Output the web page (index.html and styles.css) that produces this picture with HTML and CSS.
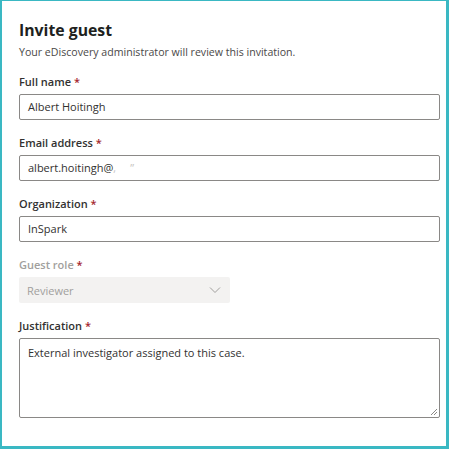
FILE: index.html
```html
<!DOCTYPE html>
<html>
<head>
<meta charset="utf-8">
<link rel="stylesheet" href="styles.css">
</head>
<body>
<div class="panel">
  <h1 class="title">Invite guest</h1>
  <p class="subtitle">Your eDiscovery administrator will review this invitation.</p>
  <div class="field">
    <label class="label">Full name <span class="req">*</span></label>
    <div class="input">Albert Hoitingh</div>
  </div>
  <div class="field">
    <label class="label">Email address <span class="req">*</span></label>
    <div class="input">albert.hoitingh@<span class="blur">&#8218;&nbsp;&nbsp;&nbsp;&nbsp;&nbsp;&#8221;</span></div>
  </div>
  <div class="field">
    <label class="label">Organization <span class="req">*</span></label>
    <div class="input">InSpark</div>
  </div>
  <div class="field">
    <label class="label disabled">Guest role <span class="req">*</span></label>
    <div class="select">
      <span>Reviewer</span>
      <svg class="chev" width="12" height="8" viewBox="0 0 12 8"><path d="M1 1.5 L6 6.5 L11 1.5" fill="none" stroke="#a19f9d" stroke-width="1"/></svg>
    </div>
  </div>
  <div class="field">
    <label class="label">Justification <span class="req">*</span></label>
    <div class="textarea">External investigator assigned to this case.
      <svg class="grip" width="9" height="9" viewBox="0 0 9 9"><path d="M8 2 L2 8 M8 5 L5 8" stroke="#8a8886" stroke-width="1"/></svg>
    </div>
  </div>
</div>
</body>
</html>
```
FILE: styles.css
```css
html, body {
  margin: 0;
  padding: 0;
  background: #ffffff;
}
body {
  font-family: "Open Sans", "Noto Sans", sans-serif;
  color: #323130;
}
.panel {
  box-sizing: border-box;
  width: 449px;
  height: 449px;
  border-style: solid;
  border-color: #3ab8c3;
  border-width: 1px 3px 3px 2px;
  padding: 17px 8px 0 17px;
}
.title {
  margin: 0;
  font-size: 15.8px;
  font-weight: 700;
  line-height: 24px;
  color: #201f1e;
}
.subtitle {
  margin: 2px 0 0;
  font-size: 10.6px;
  line-height: 16px;
  color: #4a4847;
}
.field {
  display: flex;
  flex-direction: column;
}
.label {
  font-size: 11px;
  font-weight: 600;
  line-height: 16px;
  color: #323130;
  padding: 0 0 4px;
}
.label.disabled { color: #a19f9d; }
.req { color: #a4262c; }
.subtitle + .field { margin-top: 14px; }
.field + .field { margin-top: 15px; }
.input {
  box-sizing: border-box;
  width: 421px;
  height: 26px;
  border: 1px solid #8a8886;
  border-radius: 2px;
  padding: 0 8px;
  font-size: 11px;
  line-height: 24px;
  color: #323130;
}
.blur { color: #c8c6c4; }
.select {
  box-sizing: border-box;
  width: 211px;
  height: 26px;
  background: #f3f2f1;
  border-radius: 2px;
  padding: 0 9px 0 8px;
  display: flex;
  align-items: center;
  justify-content: space-between;
  font-size: 11px;
  color: #a19f9d;
}
.textarea {
  position: relative;
  box-sizing: border-box;
  width: 421px;
  height: 80px;
  border: 1px solid #8a8886;
  border-radius: 2px;
  padding: 5px 8px;
  font-size: 11px;
  line-height: 17px;
}
.grip {
  position: absolute;
  right: 1px;
  bottom: 1px;
}
```
